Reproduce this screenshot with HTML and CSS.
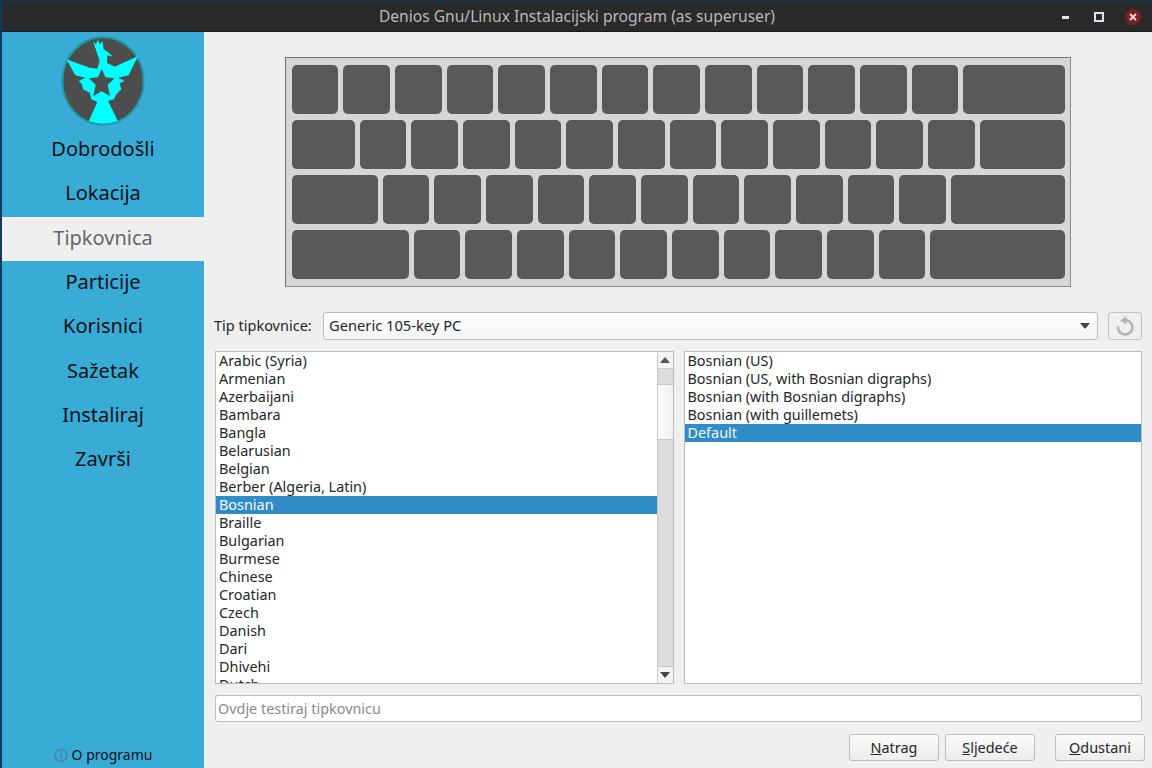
FILE: index.html
```html
<!DOCTYPE html>
<html lang="en">
<head>
  <meta charset="UTF-8">
  <title>Denios Gnu/Linux Instalacijski program (as superuser)</title>
  <link rel="stylesheet" href="styles.css">
</head>
<body>
  <header class="titlebar">
    <div class="title">Denios Gnu/Linux Instalacijski program (as superuser)</div>
    <div class="window-buttons">
      <svg class="win-min" width="10" height="10" viewBox="0 0 10 10"><rect x="1" y="4" width="7" height="3" fill="#dfe3ea"/></svg>
      <svg class="win-max" width="10" height="12" viewBox="0 0 10 12"><rect x="1" y="2" width="8" height="8" fill="none" stroke="#dfe3ea" stroke-width="2"/></svg>
      <svg class="win-close" width="16" height="16" viewBox="0 0 16 16"><circle cx="8" cy="8" r="8" fill="#7d1f24"/><path d="M5 5l6 6M11 5l-6 6" stroke="#e8dcdc" stroke-width="2"/></svg>
    </div>
  </header>

  <div class="main">
    <aside class="sidebar">
      <div class="logo">
        <svg width="90" height="90" viewBox="0 0 270 270">
          <ellipse cx="135" cy="135" rx="122" ry="131" fill="#4d4d4d" stroke="#1c9aa6" stroke-width="6"/>
          <path fill="#00ffff" fill-rule="evenodd" d="M105 15L113 25L120 12L126 25L133 15L137 40L152 50L165 62L148 58L147 80L170 92L240 60L212 118L180 125L200 135L185 142L190 160L175 175L168 190L150 195L180 256Q135 270 92 256L118 198L100 190L95 170L75 160L72 145L62 135L82 125L52 118L25 70L95 95L118 98L125 75Z M131 98L142 124L170 127L149 146L156 180L131 166L106 180L113 146L93 127L120 124Z"/>
        </svg>
      </div>
      <nav class="steps">
        <div class="step">Dobrodošli</div>
        <div class="step">Lokacija</div>
        <div class="step active">Tipkovnica</div>
        <div class="step">Particije</div>
        <div class="step">Korisnici</div>
        <div class="step">Sažetak</div>
        <div class="step">Instaliraj</div>
        <div class="step">Završi</div>
      </nav>
      <div class="about">
        <svg width="14" height="14" viewBox="0 0 14 14"><circle cx="7" cy="7" r="6" fill="none" stroke="#4f7f94" stroke-width="1.2"/><path d="M7 3.2v1.4M7 6v4.8" stroke="#4f7f94" stroke-width="1.4"/></svg>
        <span>O programu</span>
      </div>
    </aside>

    <section class="content">
      <div class="keyboard">
        <div class="kb-row">
          <div class="key"></div><div class="key"></div><div class="key"></div><div class="key"></div><div class="key"></div><div class="key"></div><div class="key"></div><div class="key"></div><div class="key"></div><div class="key"></div><div class="key"></div><div class="key"></div><div class="key"></div>
          <div class="key fill"></div>
        </div>
        <div class="kb-row">
          <div class="key w-tab"></div>
          <div class="key"></div><div class="key"></div><div class="key"></div><div class="key"></div><div class="key"></div><div class="key"></div><div class="key"></div><div class="key"></div><div class="key"></div><div class="key"></div><div class="key"></div><div class="key"></div>
          <div class="key fill"></div>
        </div>
        <div class="kb-row">
          <div class="key w-caps"></div>
          <div class="key"></div><div class="key"></div><div class="key"></div><div class="key"></div><div class="key"></div><div class="key"></div><div class="key"></div><div class="key"></div><div class="key"></div><div class="key"></div><div class="key"></div>
          <div class="key fill"></div>
        </div>
        <div class="kb-row">
          <div class="key w-shift"></div>
          <div class="key"></div><div class="key"></div><div class="key"></div><div class="key"></div><div class="key"></div><div class="key"></div><div class="key"></div><div class="key"></div><div class="key"></div><div class="key"></div>
          <div class="key fill"></div>
        </div>
      </div>

      <div class="model-row">
        <label class="model-label">Tip tipkovnice:</label>
        <div class="combo">
          <span>Generic 105-key PC</span>
          <svg width="10" height="6" viewBox="0 0 10 6"><path d="M0 0h10L5 6z" fill="#444"/></svg>
        </div>
        <div class="reset">
          <svg width="22" height="22" viewBox="0 0 22 22"><path d="M8.5 5.6A7.2 7.2 0 1 1 4 11.5" fill="none" stroke="#b4b4b4" stroke-width="2.6"/><path d="M12.5 1L12.5 9.5L6 5.5z" fill="#b4b4b4"/></svg>
        </div>
      </div>

      <div class="lists">
        <div class="listbox">
          <div class="items">
            <div class="item">Arabic (Syria)</div>
            <div class="item">Armenian</div>
            <div class="item">Azerbaijani</div>
            <div class="item">Bambara</div>
            <div class="item">Bangla</div>
            <div class="item">Belarusian</div>
            <div class="item">Belgian</div>
            <div class="item">Berber (Algeria, Latin)</div>
            <div class="item selected">Bosnian</div>
            <div class="item">Braille</div>
            <div class="item">Bulgarian</div>
            <div class="item">Burmese</div>
            <div class="item">Chinese</div>
            <div class="item">Croatian</div>
            <div class="item">Czech</div>
            <div class="item">Danish</div>
            <div class="item">Dari</div>
            <div class="item">Dhivehi</div>
            <div class="item">Dutch</div>
          </div>
          <div class="scrollbar">
            <div class="sb-btn"><svg width="10" height="6" viewBox="0 0 10 6"><path d="M0 6h10L5 0z" fill="#555"/></svg></div>
            <div class="sb-track">
              <div class="sb-thumb"></div>
            </div>
            <div class="sb-btn"><svg width="10" height="6" viewBox="0 0 10 6"><path d="M0 0h10L5 6z" fill="#444"/></svg></div>
          </div>
        </div>
        <div class="listbox">
          <div class="items">
            <div class="item">Bosnian (US)</div>
            <div class="item">Bosnian (US, with Bosnian digraphs)</div>
            <div class="item">Bosnian (with Bosnian digraphs)</div>
            <div class="item">Bosnian (with guillemets)</div>
            <div class="item selected">Default</div>
          </div>
        </div>
      </div>

      <input class="test-input" type="text" placeholder="Ovdje testiraj tipkovnicu">

      <div class="actions">
        <div class="btn"><u>N</u>atrag</div>
        <div class="btn"><u>S</u>ljedeće</div>
        <div class="btn cancel"><u>O</u>dustani</div>
      </div>
    </section>
  </div>
</body>
</html>
```

FILE: styles.css
```css
* {
  box-sizing: border-box;
}
body {
  margin: 0;
  height: 768px;
  overflow: hidden;
  display: flex;
  flex-direction: column;
  font-family: "Noto Sans", sans-serif;
  font-size: 14.4px;
  color: #232629;
  background: #0d3a63;
}
.titlebar {
  height: 32px;
  flex: none;
  position: relative;
  display: flex;
  align-items: center;
  justify-content: center;
  background: #2a2a2a;
  border-top: 1px solid #0d3a63;
  border-bottom: 1px solid #1a1a1a;
  margin-left: 2px;
}
.title {
  color: #b9b9b9;
  font-size: 15.6px;
}
.window-buttons {
  position: absolute;
  right: 11px;
  top: 8px;
  display: flex;
  align-items: center;
  gap: 21px;
}
.win-min {
  margin-right: 2px;
}
.main {
  flex: 1;
  display: flex;
  margin-left: 2px;
  min-height: 0;
}
.sidebar {
  width: 202px;
  flex: none;
  display: flex;
  flex-direction: column;
  background: #38acd6;
  color: #0c1114;
}
.logo {
  height: 96px;
  display: flex;
  justify-content: center;
  padding-top: 4px;
}
.step {
  height: 44.3px;
  padding-bottom: 3px;
  display: flex;
  align-items: center;
  justify-content: center;
  font-size: 20px;
}
.step.active {
  background: #efefef;
  color: #666;
}
.about {
  margin-top: auto;
  height: 27px;
  display: flex;
  align-items: center;
  justify-content: center;
  gap: 4px;
  font-size: 14px;
  color: #0c1114;
}
.content {
  flex: 1;
  min-width: 0;
  display: flex;
  flex-direction: column;
  background: #efefef;
  padding: 0 7px 0 11px;
}
.keyboard {
  height: 230px;
  flex: none;
  margin: 25px 74px 0 70px;
  padding: 7px 5px 7.5px 5.7px;
  display: flex;
  flex-direction: column;
  gap: 6.5px;
  background: #d6d6d6;
  border: 1px solid #6f6f6f;
  border-right-color: #8a8a8a;
  border-bottom-color: #8a8a8a;
}
.kb-row {
  flex: 1;
  display: flex;
  gap: 5px;
}
.key {
  width: 46.68px;
  flex: none;
  border-radius: 5px;
  background: #595959;
}
.key.fill {
  flex: 1;
}
.key.w-tab {
  width: 63px;
}
.key.w-caps {
  width: 86px;
}
.key.w-shift {
  width: 117px;
}
.model-row {
  margin: 25px 3px 0 0;
  height: 28px;
  flex: none;
  display: flex;
  align-items: center;
}
.model-label {
  margin-left: -1px;
  width: 109px;
  flex: none;
  padding-bottom: 3px;
  font-size: 14.5px;
}
.combo {
  flex: 1;
  height: 28px;
  display: flex;
  align-items: center;
  justify-content: space-between;
  padding: 0 7px 0 5px;
  background: linear-gradient(#ffffff, #f4f4f4);
  border: 1px solid #bcbcbc;
  border-radius: 3px;
}
.combo span {
  padding-bottom: 3px;
  font-size: 14.7px;
}
.reset {
  width: 34px;
  height: 28px;
  margin-left: 10px;
  flex: none;
  display: flex;
  align-items: center;
  justify-content: center;
  background: #efefef;
  border: 1px solid #c2c2c2;
  border-radius: 3px;
}
.lists {
  margin: 11px 3px 0 0;
  height: 333px;
  flex: none;
  display: flex;
  gap: 10px;
}
.listbox {
  flex: 1;
  min-width: 0;
  display: flex;
  overflow: hidden;
  background: #fff;
  border: 1px solid #bcbcbc;
}
.items {
  flex: 1;
  min-width: 0;
  overflow: hidden;
}
.item {
  height: 18px;
  line-height: 18px;
  padding-left: 3px;
  white-space: nowrap;
}
.item.selected {
  background: #308cc6;
  color: #f4f9fc;
}
.scrollbar {
  width: 16px;
  flex: none;
  display: flex;
  flex-direction: column;
  border-left: 1px solid #c8c8c8;
}
.sb-btn {
  height: 16px;
  flex: none;
  display: flex;
  align-items: center;
  justify-content: center;
  background: #f3f3f3;
}
.sb-track {
  flex: 1;
  padding-top: 15px;
  background: #dcdcdc;
  border-top: 1px solid #c8c8c8;
  border-bottom: 1px solid #c8c8c8;
}
.sb-thumb {
  height: 56px;
  background: linear-gradient(90deg, #fbfbfb, #f1f1f1);
  border-top: 1px solid #c8c8c8;
  border-bottom: 1px solid #c8c8c8;
}
.test-input {
  display: block;
  width: 927px;
  height: 27px;
  margin-top: 11px;
  padding: 0 2px;
  font: inherit;
  background: #fff;
  border: 1px solid #bcbcbc;
  border-radius: 3px;
  outline: none;
}
.test-input::placeholder {
  color: #8a8a8a;
}
.actions {
  margin-top: 12px;
  display: flex;
  justify-content: flex-end;
  gap: 6px;
}
.btn {
  width: 90px;
  height: 27px;
  display: flex;
  align-items: center;
  justify-content: center;
  background: linear-gradient(#fbfbfb, #ececec);
  border: 1px solid #bdbdbd;
  border-radius: 3px;
}
.btn.cancel {
  margin-left: 14px;
}
```
